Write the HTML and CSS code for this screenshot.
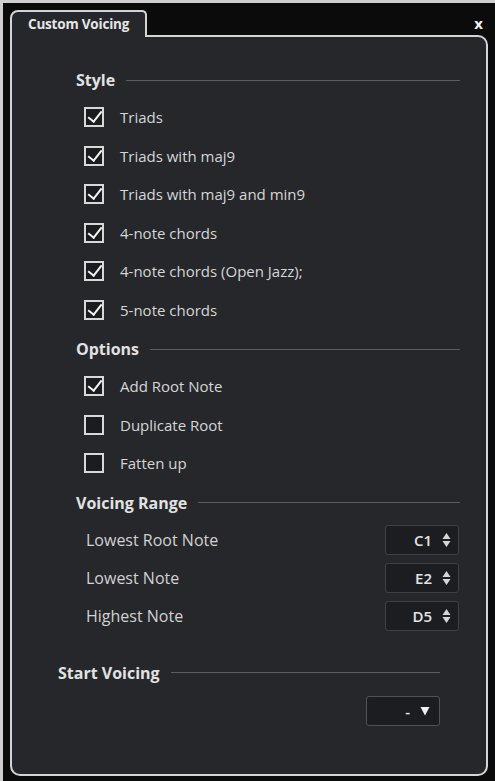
FILE: index.html
```html
<!DOCTYPE html>
<html>
<head>
    <title>Custom Voicing</title>
    <link rel="stylesheet" href="styles.css">
</head>
<body>
    <div class="window">
        <div class="header">
            <div class="tab">Custom Voicing</div>
            <div class="close">x</div>
        </div>
        <div class="panel">
            <div class="group">
                <div class="heading">Style</div>
                <label class="check-row"><span class="box checked"></span>Triads</label>
                <label class="check-row"><span class="box checked"></span>Triads with maj9</label>
                <label class="check-row"><span class="box checked"></span>Triads with maj9 and min9</label>
                <label class="check-row"><span class="box checked"></span>4-note chords</label>
                <label class="check-row"><span class="box checked"></span>4-note chords (Open Jazz);</label>
                <label class="check-row"><span class="box checked"></span>5-note chords</label>

                <div class="heading gap-top">Options</div>
                <label class="check-row"><span class="box checked"></span>Add Root Note</label>
                <label class="check-row"><span class="box"></span>Duplicate Root</label>
                <label class="check-row"><span class="box"></span>Fatten up</label>

                <div class="heading gap-top">Voicing Range</div>
                <div class="range-list">
                    <div class="range-row">
                        <span>Lowest Root Note</span>
                        <div class="spin">C1
                            <svg width="9" height="16" viewBox="0 0 9 16"><path d="M4.5 1 L8.5 7 L0.5 7 Z M0.5 9 L8.5 9 L4.5 15 Z" fill="#d6d6d6"/></svg>
                        </div>
                    </div>
                    <div class="range-row">
                        <span>Lowest Note</span>
                        <div class="spin">E2
                            <svg width="9" height="16" viewBox="0 0 9 16"><path d="M4.5 1 L8.5 7 L0.5 7 Z M0.5 9 L8.5 9 L4.5 15 Z" fill="#d6d6d6"/></svg>
                        </div>
                    </div>
                    <div class="range-row">
                        <span>Highest Note</span>
                        <div class="spin">D5
                            <svg width="9" height="16" viewBox="0 0 9 16"><path d="M4.5 1 L8.5 7 L0.5 7 Z M0.5 9 L8.5 9 L4.5 15 Z" fill="#d6d6d6"/></svg>
                        </div>
                    </div>
                </div>
            </div>

            <div class="group start">
                <div class="heading">Start Voicing</div>
                <div class="select-wrap">
                    <div class="select">-
                        <svg width="10" height="10" viewBox="0 0 10 10"><path d="M0.5 1 L9.5 1 L5 9.5 Z" fill="#f0f0f0"/></svg>
                    </div>
                </div>
            </div>
        </div>
    </div>
</body>
</html>
```

FILE: styles.css
```css
* {
    box-sizing: border-box;
}

body {
    margin: 0;
    padding: 3px 0 0 3px;
    background: #cfcfcf;
    font-family: "Open Sans", "Noto Sans", sans-serif;
}

.window {
    display: flex;
    flex-direction: column;
    width: 492px;
    height: 778px;
    padding: 7px 7px 5px 7px;
    background: #0b0b0c;
}

.header {
    display: flex;
    justify-content: space-between;
    align-items: flex-end;
    height: 25px;
}

.tab {
    position: relative;
    z-index: 1;
    width: 137px;
    height: 27px;
    margin-bottom: -2px;
    padding: 3px 0 0 16px;
    border: 2px solid #d4d4d4;
    border-bottom: none;
    border-radius: 8px 5px 0 0;
    background: #25272b;
    color: #e6e6e6;
    font-size: 13.5px;
    font-weight: 700;
    letter-spacing: -0.2px;
}

.close {
    align-self: center;
    margin-right: 5px;
    color: #f2f2f2;
    font-size: 15px;
    font-weight: 700;
}

.panel {
    flex: 1;
    padding-top: 33px;
    border: 2px solid #d4d4d4;
    border-radius: 0 10px 10px 10px;
    background: #25272b;
}

.group {
    padding: 0 26px 0 64px;
}

.heading {
    display: flex;
    align-items: center;
    gap: 11px;
    height: 20px;
    margin-bottom: 8px;
    color: #e2e2e2;
    font-size: 16px;
    font-weight: 700;
}

.heading::after {
    content: "";
    flex: 1;
    height: 1px;
    background: #5b5d61;
}

.gap-top {
    margin-top: 10px;
}

.check-row {
    display: flex;
    align-items: center;
    gap: 16px;
    height: 38.5px;
    padding-left: 8px;
    color: #d6d6d6;
    font-size: 15px;
}

.box {
    position: relative;
    width: 20px;
    height: 20px;
    border: 2px solid #d8d8d8;
    background: #1b1c1f;
}

.box.checked::after {
    content: "";
    position: absolute;
    left: 5px;
    top: -1px;
    width: 6px;
    height: 12px;
    border: solid #f4f4f4;
    border-width: 0 2.5px 2.5px 0;
    transform: rotate(38deg);
}

.range-list {
    margin-top: 2px;
}

.range-row {
    display: flex;
    justify-content: space-between;
    align-items: center;
    height: 38px;
    padding-left: 10px;
    color: #d2d2d2;
    font-size: 16px;
}

.spin {
    display: flex;
    justify-content: flex-end;
    align-items: center;
    gap: 10px;
    width: 74px;
    height: 30px;
    margin-right: 1px;
    padding-right: 7px;
    border: 1px solid #3e4044;
    border-radius: 3px;
    background: #1c1d20;
    color: #e4e4e4;
    font-size: 15px;
    font-weight: 600;
}

.start {
    margin-top: 28px;
    padding: 0 46px;
}

.start .heading {
    margin-bottom: 13px;
}

.select-wrap {
    display: flex;
    justify-content: flex-end;
}

.select {
    display: flex;
    justify-content: flex-end;
    align-items: center;
    gap: 10px;
    width: 74px;
    height: 30px;
    padding-right: 9px;
    border: 1px solid #505256;
    border-radius: 3px;
    background: #1c1d20;
    color: #e4e4e4;
    font-size: 15px;
    font-weight: 600;
}
```
